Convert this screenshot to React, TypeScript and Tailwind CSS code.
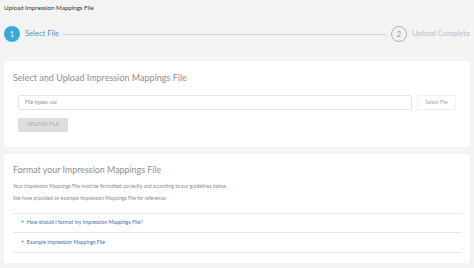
import React from "react";

export default function App() {
  return (
    <div
      className="w-[474px] h-[268px] bg-[#f3f3f3] overflow-hidden px-[4px] pt-[3px]"
      style={{ fontFamily: "Lato, 'Open Sans', sans-serif" }}
    >
      <div className="text-[6.2px] leading-[10px] text-[#333]">Upload Impression Mappings File</div>
      {/* Stepper */}
      <div className="flex items-center h-[24px] mt-[9px]">
        <div className="w-[16px] h-[16px] rounded-full bg-[#3ba9dd] text-white text-[7px] flex items-center justify-center">1</div>
        <div className="ml-[5px] text-[7.6px] text-[#6490b6]">Select File</div>
        <div className="flex-1 h-px bg-[#d6d6d6] mx-[4px]" />
        <div className="w-[16px] h-[16px] rounded-full border border-[#b0b0b0] text-[#a0a0a0] text-[8px] flex items-center justify-center">2</div>
        <div className="ml-[5px] text-[7.6px] text-[#c0c0c0]">Upload Complete</div>
      </div>
      {/* Card 1 */}
      <div className="mt-[15px] bg-white rounded-[2px] h-[86px] px-[9px] pt-[11px]">
        <div className="text-[9px] leading-[12px] text-[#8f8f8f]">Select and Upload Impression Mappings File</div>
        <div className="flex items-center mt-[11px] pl-[5px] pr-[5px]">
          <div className="flex-1 h-[15px] border border-[#e4e4e4] rounded-[2px] flex items-center pl-[6px] text-[5.2px] text-[#8c8c8c]">File types: csv</div>
          <div className="ml-[5px] w-[39px] h-[15px] border border-[#efefef] flex items-center justify-center text-[5px] text-[#a5a5a5]">Select File</div>
        </div>
        <div className="ml-[5px] mt-[8px] w-[50px] h-[14px] bg-[#dedede] rounded-[1px] flex items-center justify-center text-[5px] text-[#a8a8a8] tracking-wide">UPLOAD FILE</div>
      </div>
      {/* Card 2 */}
      <div className="mt-[7px] bg-white rounded-[2px] h-[109px] px-[9px] pt-[10px]">
        <div className="text-[8.9px] leading-[12px] text-[#8f8f8f]">Format your Impression Mappings File</div>
        <div className="mt-[7px] text-[5px] leading-[7px] text-[#8a8a8a]">Your Impression Mappings File must be formatted correctly and according to our guidelines below.</div>
        <div className="mt-[5px] text-[5px] leading-[7px] text-[#8a8a8a]">We have provided an example Impression Mappings File for reference.</div>
        <div className="mt-[11px] border-t border-[#e6e6e6]">
          <div className="h-[19px] flex items-center pl-[8px] text-[5.2px] text-[#3b6fb6] border-b border-[#e6e6e6]">+&nbsp;&nbsp;How should I format my Impression Mappings File?</div>
          <div className="h-[20px] flex items-center pl-[8px] text-[5.2px] text-[#3b6fb6] border-b border-[#e6e6e6]">+&nbsp;&nbsp;Example Impression Mappings File</div>
        </div>
      </div>
    </div>
  );
}
